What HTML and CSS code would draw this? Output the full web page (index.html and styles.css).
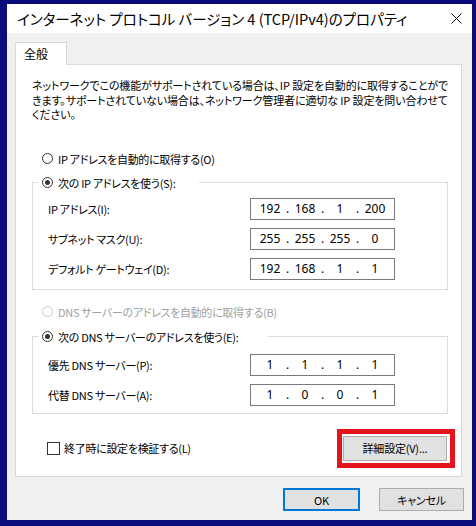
FILE: index.html
```
<!DOCTYPE html>
<html lang="ja">
<head>
<meta charset="utf-8">
<title>インターネット プロトコル バージョン 4 (TCP/IPv4)のプロパティ</title>
<link rel="stylesheet" href="styles.css">
</head>
<body>
<div class="window">
  <div class="titlebar">
    <span class="title">インターネット プロトコル バージョン 4 (TCP/IPv4)のプロパティ</span>
    <span class="close"><svg width="11" height="11" viewBox="0 0 11 11"><path d="M0.5 0.5L10.5 10.5M10.5 0.5L0.5 10.5" stroke="#111" stroke-width="1" fill="none"/></svg></span>
  </div>
  <div class="body">
    <div class="tabs"><div class="tab">全般</div></div>
    <div class="panel">
      <p class="desc">ネットワークでこの機能がサポートされている場合は、IP 設定を自動的に取得することがで<br>きます。サポートされていない場合は、ネットワーク管理者に適切な IP 設定を問い合わせて<br>ください。</p>
      <div class="radio radio-first"><span class="rb"></span><span>IP アドレスを自動的に取得する(O)</span></div>
      <fieldset class="group group-ip">
        <legend class="legend legend-ip"><span class="rb checked"></span><span>次の IP アドレスを使う(S):</span></legend>
        <div class="row"><span class="lbl">IP アドレス(I):</span><div class="ipbox"><span class="oct">192</span><span class="dot">.</span><span class="oct">168</span><span class="dot">.</span><span class="oct">1</span><span class="dot">.</span><span class="oct">200</span></div></div>
        <div class="row"><span class="lbl">サブネット マスク(U):</span><div class="ipbox"><span class="oct">255</span><span class="dot">.</span><span class="oct">255</span><span class="dot">.</span><span class="oct">255</span><span class="dot">.</span><span class="oct">0</span></div></div>
        <div class="row"><span class="lbl">デフォルト ゲートウェイ(D):</span><div class="ipbox"><span class="oct">192</span><span class="dot">.</span><span class="oct">168</span><span class="dot">.</span><span class="oct">1</span><span class="dot">.</span><span class="oct">1</span></div></div>
      </fieldset>
      <div class="radio radio-dns disabled"><span class="rb"></span><span>DNS サーバーのアドレスを自動的に取得する(B)</span></div>
      <fieldset class="group group-dns">
        <legend class="legend legend-dns"><span class="rb checked"></span><span>次の DNS サーバーのアドレスを使う(E):</span></legend>
        <div class="row"><span class="lbl">優先 DNS サーバー(P):</span><div class="ipbox"><span class="oct">1</span><span class="dot">.</span><span class="oct">1</span><span class="dot">.</span><span class="oct">1</span><span class="dot">.</span><span class="oct">1</span></div></div>
        <div class="row"><span class="lbl">代替 DNS サーバー(A):</span><div class="ipbox"><span class="oct">1</span><span class="dot">.</span><span class="oct">0</span><span class="dot">.</span><span class="oct">0</span><span class="dot">.</span><span class="oct">1</span></div></div>
      </fieldset>
      <div class="bottom-row">
        <div class="check"><span class="cb"></span><span>終了時に設定を検証する(L)</span></div>
        <div class="highlight"><button class="btn btn-adv" type="button">詳細設定(V)...</button></div>
      </div>
    </div>
    <div class="actions">
      <button class="btn btn-ok" type="button">OK</button>
      <button class="btn btn-cancel" type="button">キャンセル</button>
    </div>
  </div>
</div>
</body>
</html>
```

FILE: styles.css
```
* { box-sizing: border-box; }
html, body { margin: 0; padding: 0; }
body {
  width: 476px;
  height: 526px;
  background: #0b0b7c;
  padding: 4px 4px 6px 7px;
  font-family: "Noto Sans CJK JP", "Noto Sans", sans-serif;
  font-feature-settings: "palt" 1;
  font-size: 11px;
  letter-spacing: -0.3px;
  color: #000;
  overflow: hidden;
}
.window {
  width: 465px;
  height: 516px;
  background: #f0f0f0;
  display: flex;
  flex-direction: column;
}
.titlebar {
  height: 29px;
  background: #fff;
  display: flex;
  align-items: center;
  justify-content: space-between;
  padding: 0 10px 0 10px;
}
.title { font-size: 14.5px; letter-spacing: 0; white-space: nowrap; }
.close { display: flex; width: 11px; height: 11px; }
.body {
  padding: 9px 10px 0 8px;
  display: flex;
  flex-direction: column;
}
.tabs { display: flex; height: 22px; }
.tab {
  width: 52px;
  height: 23px;
  background: #fff;
  border: 1px solid #d9d9d9;
  border-bottom: none;
  padding-left: 8px;
  line-height: 21px;
  font-size: 12px;
  letter-spacing: 0;
  position: relative;
  z-index: 1;
}
.panel {
  background: #fff;
  border: 1px solid #d9d9d9;
  height: 413px;
  padding: 0 13px 0 16px;
  display: flex;
  flex-direction: column;
}
.desc {
  margin: 13px -20px 0 0;
  line-height: 14.5px;
  letter-spacing: -0.12px;
  white-space: nowrap;
}
.radio, .legend, .check {
  display: flex;
  align-items: center;
  height: 20px;
  white-space: nowrap;
}
.radio { padding-left: 10px; }
.radio-first { margin-top: 27px; }
.radio-dns { margin-top: 12px; }
.rb {
  width: 11px;
  height: 11px;
  border: 1px solid #333;
  border-radius: 50%;
  margin-right: 5px;
  flex: none;
  display: flex;
  align-items: center;
  justify-content: center;
  background: #fff;
}
.rb.checked::after {
  content: "";
  width: 5px;
  height: 5px;
  border-radius: 50%;
  background: #333;
}
.disabled { color: #a0a0a0; }
.disabled .rb { border-color: #c8c8c8; }
.group {
  margin: 4px 0 0 0;
  border: 1px solid #dcdcdc;
  padding: 5px 0 9px 15px;
  min-width: 0;
}
.group-dns { margin-top: 5px; padding-top: 7px; padding-bottom: 7px; }
.legend { padding: 0 0 0 4px; margin-left: -10px; }
.legend-ip { width: 161px; }
.legend-dns { width: 230px; }
.row {
  display: flex;
  align-items: center;
  height: 22px;
  margin-bottom: 8px;
}
.row:last-of-type { margin-bottom: 0; }
.lbl { width: 202px; white-space: nowrap; }
.ipbox {
  width: 145px;
  height: 22px;
  border: 1px solid #7a7a7a;
  display: flex;
  align-items: center;
  padding-left: 5px;
  font-family: "Noto Sans", sans-serif;
  font-size: 12px;
  letter-spacing: 0;
}
.oct { width: 28px; text-align: center; }
.dot { width: 7px; text-align: center; }
.bottom-row {
  display: flex;
  align-items: center;
  justify-content: space-between;
  margin: 15px -7px 0 0;
}
.check { padding-left: 15px; }
.cb {
  width: 13px;
  height: 13px;
  border: 1px solid #333;
  background: #fff;
  margin-right: 4px;
}
.highlight {
  border: 5px solid #e3141c;
  padding: 2px 3px 2px 1px;
}
.btn {
  font-family: "Noto Sans CJK JP", "Noto Sans", sans-serif;
  font-feature-settings: "palt" 1;
  font-size: 11px;
  letter-spacing: -0.2px;
  color: #000;
  background: #e1e1e1;
  border: 1px solid #adadad;
  height: 25px;
  padding: 0;
  margin: 0;
}
.btn-adv { width: 104px; display: block; }
.actions {
  display: flex;
  justify-content: flex-end;
  gap: 19px;
  margin: 11px -2px 0 0;
}
.btn-ok { width: 77px; height: 23px; border: 2px solid #0078d7; }
.btn-cancel { width: 85px; height: 23px; }
```
